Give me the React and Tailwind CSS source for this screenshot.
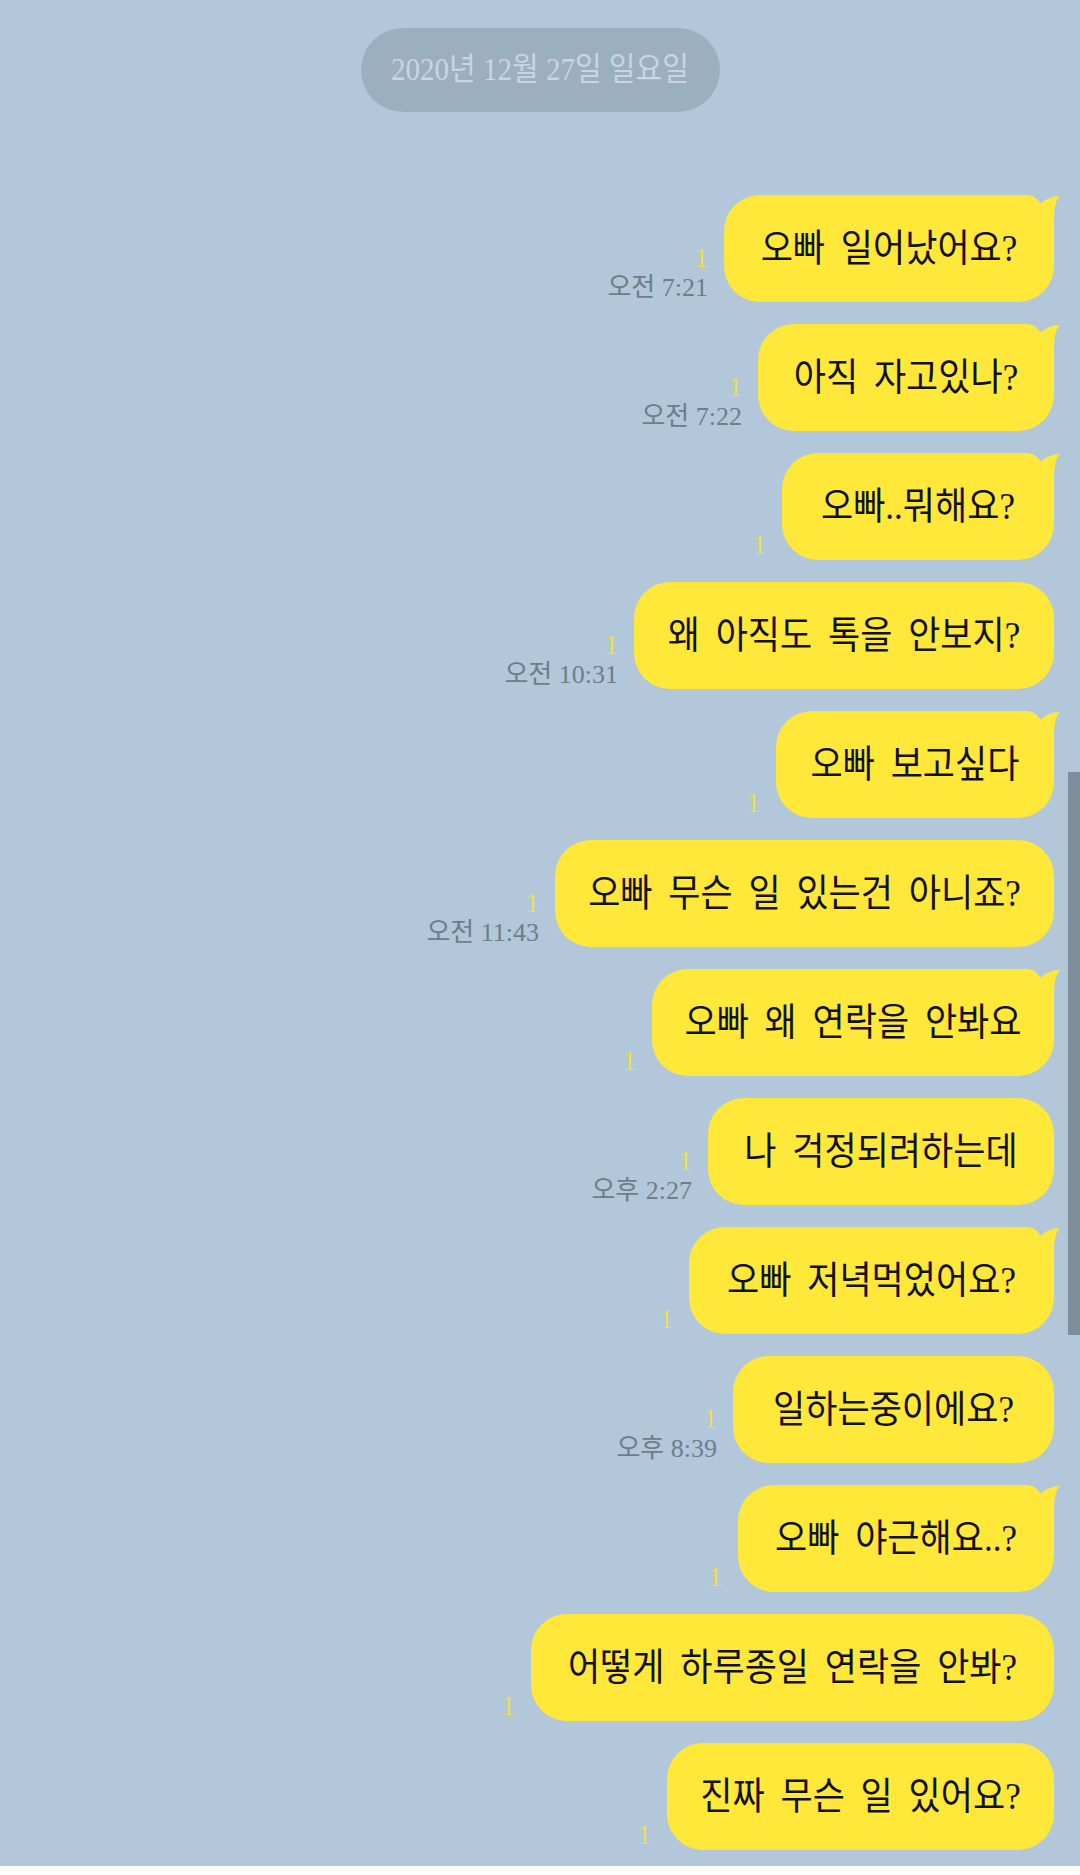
const MESSAGES = [
  { text: '오빠 일어났어요?', w: 'w-[330px]', tail: true, time: '오전 7:21' },
  { text: '아직 자고있나?', w: 'w-[296px]', tail: true, time: '오전 7:22' },
  { text: '오빠..뭐해요?', w: 'w-[272px]', tail: true },
  { text: '왜 아직도 톡을 안보지?', w: 'w-[420px]', tail: false, time: '오전 10:31' },
  { text: '오빠 보고싶다', w: 'w-[278px]', tail: true },
  { text: '오빠 무슨 일 있는건 아니죠?', w: 'w-[499px]', tail: false, time: '오전 11:43' },
  { text: '오빠 왜 연락을 안봐요', w: 'w-[402px]', tail: true },
  { text: '나 걱정되려하는데', w: 'w-[346px]', tail: false, time: '오후 2:27' },
  { text: '오빠 저녁먹었어요?', w: 'w-[365px]', tail: true },
  { text: '일하는중이에요?', w: 'w-[321px]', tail: false, time: '오후 8:39' },
  { text: '오빠 야근해요..?', w: 'w-[316px]', tail: true },
  { text: '어떻게 하루종일 연락을 안봐?', w: 'w-[523px]', tail: false },
  { text: '진짜 무슨 일 있어요?', w: 'w-[387px]', tail: false },
];

const FONT = "font-['Liberation_Serif','Noto_Sans_CJK_KR',serif]";

function Tail() {
  return (
    <svg
      className="absolute top-0 right-[-6px]"
      width="46"
      height="45"
      viewBox="0 0 46 45"
    >
      <path
        d="M0 0 L12 0 C20 0 24 4 26 9 C32 4 38 1 46 1 C42 5 40 12 40 24 L40 45 L0 45 Z"
        fill="#ffe83a"
      />
    </svg>
  );
}

function Bubble({ msg }) {
  return (
    <div className="flex justify-end items-end gap-[16px]">
      {/* read count + time */}
      <div className={`flex flex-col items-end text-[26px] leading-[29px] ${FONT}`}>
        <span className="text-[27px] text-[#ebdf4e]">1</span>
        {msg.time && <span className="text-[#6f7c89] whitespace-nowrap">{msg.time}</span>}
      </div>
      <div
        className={`relative h-[107px] ${msg.w} shrink-0 rounded-[36px] bg-[#ffe83a] flex items-center justify-center`}
      >
        {msg.tail && <Tail />}
        <span
          className={`relative inline-block whitespace-nowrap text-[35px] leading-none text-[#111] scale-y-[1.08] [word-spacing:7px] ${FONT}`}
        >
          {msg.text}
        </span>
      </div>
    </div>
  );
}

export default function App() {
  return (
    <div className="relative w-[1080px] h-[1875px] bg-white overflow-hidden">
      <div className="h-[1866px] bg-[#b2c7da] pt-[28px] pr-[26px]">
        {/* date divider */}
        <div className="flex justify-center pl-[26px]">
          <div
            className={`w-[359px] h-[84px] rounded-full bg-[#9cafc0] flex items-center justify-center text-[29px] text-[#c8d5e2] ${FONT}`}
          >
            <span className="inline-block scale-y-[1.1]">2020년 12월 27일 일요일</span>
          </div>
        </div>

        <div className="mt-[83px] flex flex-col gap-[22px]">
          {MESSAGES.map((m, i) => (
            <Bubble key={i} msg={m} />
          ))}
        </div>
      </div>

      {/* scrollbar */}
      <div className="absolute right-0 top-[772px] w-[12px] h-[563px] bg-[#7e8e9c]" />
    </div>
  );
}
